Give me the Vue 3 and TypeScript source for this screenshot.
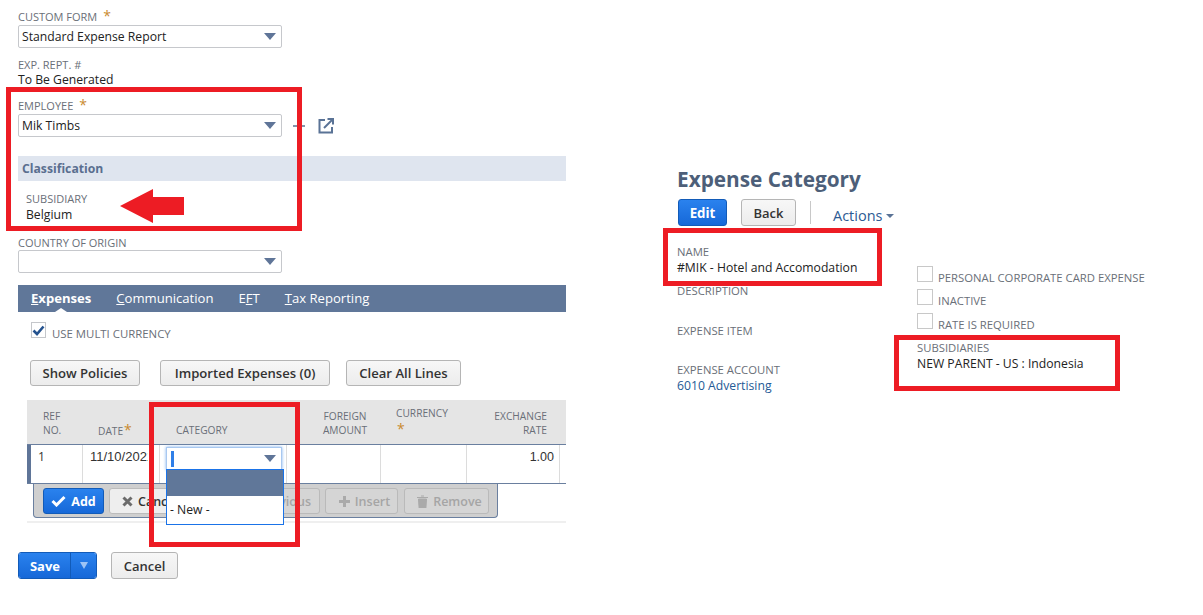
<script setup lang="ts">
const tabs: { first: string; rest: string; pre?: string; active?: boolean }[] = [
  { first: 'E', rest: 'xpenses', active: true },
  { first: 'C', rest: 'ommunication' },
  { pre: 'E', first: 'F', rest: 'T' },
  { first: 'T', rest: 'ax Reporting' },
]
const flags: string[] = ['PERSONAL CORPORATE CARD EXPENSE', 'INACTIVE', 'RATE IS REQUIRED']
</script>

<template>
  <div class="page">
    <section class="form">
      <div class="label lab-custom">CUSTOM FORM <span class="req">*</span></div>
      <div class="select"><span>Standard Expense Report</span><i class="caret"></i></div>
      <div class="label lab-exp">EXP. REPT. #</div>
      <div class="value">To Be Generated</div>
      <div class="label lab-emp">EMPLOYEE <span class="req">*</span></div>
      <div class="emp-row">
        <div class="select"><span>Mik Timbs</span><i class="caret"></i></div>
        <svg class="plus" width="14" height="14" viewBox="0 0 14 14"><path d="M1 7h12" stroke="#8494aa" stroke-width="2"/><path d="M7 4v6" stroke="#c7ced9" stroke-width="1.5"/></svg>
        <svg class="open" width="18" height="18" viewBox="0 0 18 18" fill="none" stroke="#5a7396" stroke-width="2"><path d="M8 3H2.500v12.500H15V10"/><path d="M7 11L15.500 2.500"/><path d="M10.500 2H16v5.500"/></svg>
      </div>
      <div class="band">Classification</div>
      <div class="sub">
        <div class="label">SUBSIDIARY</div>
        <div class="value">Belgium</div>
      </div>
      <div class="label lab-country">COUNTRY OF ORIGIN</div>
      <div class="select"><span></span><i class="caret"></i></div>

      <nav class="tabs">
        <span v-for="t in tabs" :key="t.first + t.rest" class="tab" :class="{ on: t.active }">{{ t.pre }}<u>{{ t.first }}</u>{{ t.rest }}</span>
      </nav>
      <div class="multi">
        <span class="check">
          <svg width="13" height="11" viewBox="0 0 13 11"><path d="M1.500 5.500L5 9l6.500-7.500" fill="none" stroke="#24528f" stroke-width="2.600"/></svg>
        </span>
        <span class="label">USE MULTI CURRENCY</span>
      </div>
      <div class="tools">
        <button class="btn b1">Show Policies</button>
        <button class="btn b2">Imported Expenses (0)</button>
        <button class="btn b3">Clear All Lines</button>
      </div>

      <div class="grid-wrap">
        <div class="thead">
          <div class="th c1">REF<br>NO.</div>
          <div class="th c2">DATE<span class="req small">*</span></div>
          <div class="th c3">CATEGORY</div>
          <div class="th c4 center">FOREIGN<br>AMOUNT</div>
          <div class="th c5 cur">CURRENCY<br><span class="req small">*</span></div>
          <div class="th c6 right">EXCHANGE<br>RATE</div>
        </div>
        <div class="tbody">
          <div class="td c1 first">1</div>
          <div class="td c2"><span class="date">11/10/2021</span></div>
          <div class="td c3 catcell"></div>
          <div class="td c4"></div>
          <div class="td c5"></div>
          <div class="td c6 right rate">1.00</div>
        </div>
        <div class="actions">
          <button class="act primary">
            <svg width="15" height="12" viewBox="0 0 15 12"><path d="M1.500 6L5.500 10 13.500 2" fill="none" stroke="#fff" stroke-width="3"/></svg>
            Add
          </button>
          <button class="act cancel">
            <svg width="11" height="11" viewBox="0 0 11 11"><path d="M1.500 1.500l8 8M9.500 1.500l-8 8" stroke="#6b6b6b" stroke-width="3"/></svg>
            Cancel
          </button>
          <button class="act dim prev">Copy Previous</button>
          <button class="act dim ins">
            <svg width="11" height="11" viewBox="0 0 11 11"><path d="M5.500 0v11M0 5.500h11" stroke="#aaa" stroke-width="3"/></svg>
            Insert
          </button>
          <button class="act dim rem">
            <svg width="11" height="13" viewBox="0 0 11 13"><path d="M0 2.500h11M4 1h3M1.500 4h8l-.6 9H2.100z" fill="#aaa" stroke="#aaa"/></svg>
            Remove
          </button>
        </div>
        <div class="menu">
          <div class="combo"><i class="cursor"></i><i class="caret"></i></div>
          <div class="list">
            <div class="picked"></div>
            <div class="opt">- New -</div>
          </div>
        </div>
      </div>

      <div class="foot">
        <div class="save"><span class="save-main">Save</span><span class="save-more"><i></i></span></div>
        <button class="btn-cancel">Cancel</button>
      </div>
    </section>

    <section class="record">
      <h1>Expense Category</h1>
      <div class="rec-tools">
        <button class="edit">Edit</button>
        <button class="back">Back</button>
        <span class="sep"></span>
        <span class="acts">Actions<i></i></span>
      </div>
      <div class="cols">
        <div class="col-a">
          <div class="label">NAME</div>
          <div class="value v-gap">#MIK - Hotel and Accomodation</div>
          <div class="label l-desc">DESCRIPTION</div>
          <div class="label l-item">EXPENSE ITEM</div>
          <div class="label l-acc">EXPENSE ACCOUNT</div>
          <div class="value link v-gap">6010 Advertising</div>
        </div>
        <div class="col-b">
          <div v-for="f in flags" :key="f" class="flag">
            <span class="box"></span><span class="label">{{ f }}</span>
          </div>
          <div class="label l-subs">SUBSIDIARIES</div>
          <div class="value v-gap">NEW PARENT - US : Indonesia</div>
        </div>
      </div>
    </section>

    <div class="mark m1"></div>
    <div class="mark m2"></div>
    <div class="mark m3"></div>
    <div class="mark m4"></div>
    <svg class="arrow" width="66" height="36" viewBox="0 0 66 36"><path d="M0 18L33 1V9H64V27H33V35z" fill="#ed1c24"/></svg>
  </div>
</template>

<style>
html, body { margin: 0; background: #fff; }
</style>

<style scoped>
.page {
  position: relative;
  width: 1203px;
  height: 615px;
  overflow: hidden;
  display: flex;
  background: #fff;
  font-family: "Open Sans", "Liberation Sans", sans-serif;
  font-size: 12.2px;
  color: #222;
}
.form { width: 548px; margin-left: 18px; padding-top: 9px; flex: none; }
.label { font-size: 11px; line-height: 14px; color: #6a6f78; white-space: nowrap; }
.value { font-size: 12.2px; line-height: 16px; color: #222; white-space: nowrap; }
.req { color: #c98a2f; font-size: 14px; margin-left: 3px; }
.req.small { margin-left: 1px; }
.select {
  box-sizing: border-box;
  width: 264px;
  height: 23px;
  border: 1px solid #c6c8cc;
  border-radius: 2px;
  display: flex;
  align-items: center;
  justify-content: space-between;
  padding: 0 5px 0 3px;
  line-height: 21px;
  background: #fff;
}
.caret {
  width: 0;
  height: 0;
  border-left: 6px solid transparent;
  border-right: 6px solid transparent;
  border-top: 7px solid #5f7598;
}
.lab-custom { height: 16px; }
.lab-exp { margin-top: 10px; }
.lab-emp { margin-top: 10px; height: 16px; }
.emp-row { display: flex; align-items: center; }
.plus { margin-left: 10px; }
.open { margin-left: 11px; }
.band {
  margin-top: 19px;
  height: 25px;
  line-height: 25px;
  padding-left: 4px;
  background: #dfe5ef;
  color: #5a6f8f;
  font-weight: 700;
  font-size: 12.2px;
}
.sub { padding: 11px 0 0 8px; height: 44px; }
.sub .value { line-height: 17px; }
.lab-country { height: 14px; }
.tabs {
  margin-top: 12px;
  height: 27px;
  background: #607799;
  display: flex;
  align-items: center;
  padding-left: 13px;
  gap: 25px;
  color: #fff;
  font-size: 13.1px;
}
.tab { position: relative; line-height: 27px; }
.tab.on { font-weight: 700; }
.tab.on::after {
  content: "";
  position: absolute;
  left: 50%;
  bottom: 0;
  margin-left: -6px;
  border-left: 6px solid transparent;
  border-right: 6px solid transparent;
  border-bottom: 4px solid #fff;
}
.multi { display: flex; align-items: flex-start; margin: 10px 0 0 13px; height: 38px; }
.check {
  box-sizing: border-box;
  width: 15px;
  height: 16px;
  border: 1px solid #c5c7cb;
  display: flex;
  align-items: center;
  justify-content: center;
}
.multi .label { margin: 5px 0 0 6px; font-size: 11.4px; }
.tools { display: flex; gap: 16px; margin-left: 12px; }
.btn {
  box-sizing: border-box;
  height: 26px;
  padding: 0;
  border: 1px solid #b5b5b5;
  border-radius: 3px;
  background: linear-gradient(#f7f7f7, #ececec);
  color: #333;
  font: 600 13.100px "Open Sans", sans-serif;
}
.b1 { width: 110px; margin-right: 4px; }
.b2 { width: 170px; }
.b3 { width: 115px; }
.grid-wrap { position: relative; margin: 14px 0 0 9px; height: 118px; padding-bottom: 3px; border-bottom: 2px solid #efefef; }
.thead { display: flex; height: 44px; background: #e5e5e5; }
.tbody { display: flex; height: 40px; border-top: 1px solid #6a7f9f; border-bottom: 1px solid #6a7f9f; box-sizing: border-box; }
.th, .td { box-sizing: border-box; flex: none; }
.th { font-size: 10.2px; line-height: 14px; color: #6a6f78; padding: 9px 7px 0 16px; align-self: stretch; }
.th.c2, .th.c3 { padding-top: 23px; }
.c1 { width: 56px; }
.c2 { width: 77px; }
.c3 { width: 127px; }
.c4 { width: 94px; }
.c5 { width: 86px; }
.c6 { width: 93px; }
.th.c2 { padding-left: 15px; }
.th.c3 { padding-left: 16px; }
.th.c4 { padding: 9px 0 0 22px; }
.th.cur { padding: 6px 0 0 15px; }
.cur .req { display: inline-block; margin-top: 2px; line-height: 14px; }
.center { text-align: center; }
.right { text-align: right; }
.th.right { padding: 9px 13px 0 0; }
.td { border-right: 1px solid #dcdcdc; font-size: 12.2px; line-height: 16px; padding: 4px 6px 0 7px; color: #333; height: 38px; }
.td.first { border-left: 4px solid #5f7598; padding-left: 7px; }
.date {
  display: block;
  width: 58px;
  overflow: hidden;
  white-space: nowrap;
  font: 13px/16px "Liberation Sans", sans-serif;
}
.td.rate { padding-right: 5px; font: 12.500px/16px "Liberation Sans", sans-serif; }
.actions {
  box-sizing: border-box;
  margin-left: 6px;
  width: 465px;
  height: 34px;
  background: #cfcfcf;
  border: 1px solid #6a7f9f;
  border-top: none;
  border-radius: 0 0 4px 4px;
  display: flex;
  align-items: center;
  gap: 5px;
  padding: 1px 0 0 9px;
}
.act {
  box-sizing: border-box;
  height: 26px;
  flex: none;
  display: inline-flex;
  align-items: center;
  justify-content: center;
  gap: 5px;
  padding: 0 7px;
  border: 1px solid #bcbcbc;
  border-radius: 3px;
  background: #eee;
  color: #333;
  font: 600 12.500px "Open Sans", sans-serif;
}
.primary { width: 61px; background: linear-gradient(#2a82ee, #1668d8); border-color: #125bb8; color: #fff; font-weight: 700; }
.cancel { width: 82px; }
.prev { width: 124px; justify-content: flex-end; padding-right: 8px; }
.ins { width: 73px; padding: 0 4px 0 10px; }
.rem { width: 85px; margin-left: 1px; padding: 0 4px 0 10px; }
.dim { background: #d5d5d5; color: #a5a5a5; border-color: #bababa; }
.menu { position: absolute; left: 139px; top: 47px; width: 118px; }
.combo {
  box-sizing: border-box;
  width: 116px;
  height: 23px;
  border: 1px solid #a8c8f0;
  box-shadow: 0 0 3px #7fb0ee;
  background: #fff;
  display: flex;
  align-items: center;
  justify-content: space-between;
  padding: 0 5px 0 4px;
}
.cursor { width: 3px; height: 16px; background: #2f7fe8; }
.list { position: relative; box-sizing: border-box; margin-top: -1px; border: 1px solid #1a73e8; background: #fff; height: 56px; }
.picked { height: 26px; background: #607799; }
.opt { font-size: 12.2px; line-height: 28px; padding-left: 3px; color: #222; }
.foot { display: flex; gap: 14px; margin-top: 29px; }
.save { display: flex; width: 79px; height: 27px; border-radius: 3px; overflow: hidden; border: 1px solid #125bb8; box-sizing: border-box; }
.save-main { flex: 1; padding-left: 1px; background: linear-gradient(#2a82ee, #1668d8); color: #fff; font-weight: 700; font-size: 13px; line-height: 26px; text-align: center; }
.save-more { width: 25px; background: linear-gradient(#2a82ee, #1668d8); border-left: 1px solid #125bb8; display: flex; align-items: center; justify-content: center; }
.save-more i { border-left: 4px solid transparent; border-right: 4px solid transparent; border-top: 7px solid #9dc4f5; }
.btn-cancel {
  box-sizing: border-box;
  width: 67px;
  height: 27px;
  border: 1px solid #b5b5b5;
  border-radius: 3px;
  background: linear-gradient(#f7f7f7, #ececec);
  color: #333;
  font: 600 13px "Open Sans", sans-serif;
  padding: 0;
}
.record { margin-left: 111px; padding-top: 165px; width: 480px; flex: none; }
.record .label { font-size: 11.3px; }
h1 { margin: 0; font-size: 20.8px; line-height: 29px; font-weight: 700; color: #4d5f79; white-space: nowrap; }
.rec-tools { display: flex; align-items: center; margin: 5px 0 0 1px; height: 27px; }
.edit {
  box-sizing: border-box;
  width: 49px;
  height: 27px;
  border: 1px solid #125bb8;
  border-radius: 3px;
  background: linear-gradient(#2a82ee, #1668d8);
  color: #fff;
  font: 700 13.300px "Open Sans", sans-serif;
  padding: 0;
}
.back {
  box-sizing: border-box;
  margin-left: 14px;
  width: 55px;
  height: 27px;
  border: 1px solid #b5b5b5;
  border-radius: 3px;
  background: linear-gradient(#f7f7f7, #ececec);
  color: #333;
  font: 600 13px "Open Sans", sans-serif;
  padding: 0;
}
.sep { width: 1px; height: 23px; background: #c8c8c8; margin-left: 14px; }
.acts { margin: 5px 0 0 22px; color: #2d5a93; font-size: 14.500px; display: inline-flex; align-items: center; gap: 4px; }
.acts i { border-left: 4px solid transparent; border-right: 4px solid transparent; border-top: 4px solid #5a7396; margin-top: 2px; }
.cols { display: flex; }
.col-a { width: 240px; padding-top: 19px; }
.v-gap { margin-top: 1px; }
.l-desc { margin-top: 8px; }
.l-item { margin-top: 26px; }
.l-acc { margin-top: 25px; }
.link { color: #255a96; }
.col-b { padding-top: 40px; }
.flag { display: flex; align-items: flex-start; height: 23px; }
.flag:nth-child(2) { height: 24px; }
.box { box-sizing: border-box; width: 16px; height: 16px; border: 1px solid #c8c8c8; flex: none; }
.flag .label { margin: 5px 0 0 5px; }
.l-subs { margin-top: 4.500px; }
.mark { position: absolute; box-sizing: border-box; border: 5px solid #ed1c24; pointer-events: none; }
.m1 { left: 6px; top: 87px; width: 296px; height: 144px; }
.m2 { left: 149px; top: 402px; width: 151px; height: 145px; }
.m3 { left: 663px; top: 228px; width: 219px; height: 58px; }
.m4 { left: 894px; top: 335px; width: 226px; height: 56px; }
.arrow { position: absolute; left: 120px; top: 188px; }
</style>
